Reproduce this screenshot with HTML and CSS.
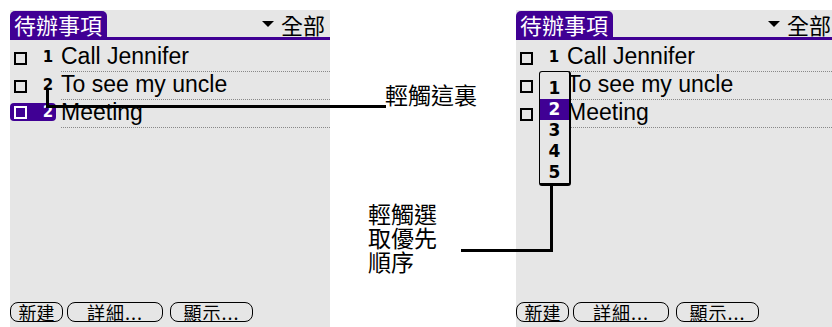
FILE: index.html
```html
<!DOCTYPE html>
<html lang="zh-Hant">
<head>
    <meta charset="UTF-8">
    <meta name="viewport" content="width=device-width, initial-scale=1.0">
    <title>待辦事項 優先順序</title>
    <link rel="stylesheet" href="styles.css">
</head>
<body>
    <main class="page">
        <section class="screen">
            <header class="titlebar">
                <span class="tab">待辦事項</span>
                <span class="category"><span class="arrow"></span>全部</span>
            </header>
            <ul class="todos">
                <li class="todo"><span class="check"></span><span class="prio">1</span><span class="desc">Call Jennifer</span></li>
                <li class="todo"><span class="check"></span><span class="prio">2</span><span class="desc">To see my uncle</span></li>
                <li class="todo selected"><span class="hit"><span class="check"></span><span class="prio">2</span></span><span class="desc">Meeting</span></li>
            </ul>
            <footer class="buttons">
                <button class="new">新建</button>
                <button class="details">詳細...</button>
                <button class="show">顯示...</button>
            </footer>
        </section>

        <div class="notes">
            <p class="note note-tap">輕觸這裏</p>
            <p class="note note-pick">輕觸選<br>取優先<br>順序</p>
        </div>

        <section class="screen">
            <header class="titlebar">
                <span class="tab">待辦事項</span>
                <span class="category"><span class="arrow"></span>全部</span>
            </header>
            <ul class="todos">
                <li class="todo"><span class="check"></span><span class="prio">1</span><span class="desc">Call Jennifer</span></li>
                <li class="todo"><span class="check"></span><span class="prio">2</span><span class="desc">To see my uncle</span></li>
                <li class="todo"><span class="check"></span><span class="prio">2</span><span class="desc">Meeting</span></li>
            </ul>
            <footer class="buttons">
                <button class="new">新建</button>
                <button class="details">詳細...</button>
                <button class="show">顯示...</button>
            </footer>
        </section>

        <!-- overlays: callout lines and the priority popup -->
        <div class="callout callout-tap"></div>
        <div class="callout callout-pick"></div>
        <ol class="popup">
            <li>1</li>
            <li class="on">2</li>
            <li>3</li>
            <li>4</li>
            <li>5</li>
        </ol>
    </main>
</body>
</html>
```

FILE: styles.css
```css
html, body {
    margin: 0;
    background: #fff;
    overflow: hidden;
}
body {
    font: 23px / 1 "Liberation Sans", "Noto Sans CJK TC", sans-serif;
    color: #000;
}
.page {
    position: relative;
    display: flex;
    align-items: flex-start;
    width: 832px;
    height: 327px;
    padding: 10px 0 0 10px;
    box-sizing: border-box;
}
.screen {
    flex: none;
    width: 320px;
    height: 317px;
    background: #e6e6e6;
    padding-top: 1px;
    box-sizing: border-box;
    display: flex;
    flex-direction: column;
}
.titlebar {
    display: flex;
    justify-content: space-between;
    align-items: flex-end;
    height: 26px;
    border-bottom: 3px solid #400094;
}
.tab {
    background: #400094;
    color: #fff;
    font-family: "Noto Sans CJK TC", sans-serif;
    font-size: 22px;
    line-height: 26px;
    padding: 0 5px 0 4px;
    border-radius: 5px 5px 0 0;
}
.category {
    display: flex;
    align-items: center;
    font-family: "Noto Sans CJK TC", sans-serif;
    font-size: 22px;
    line-height: 26px;
    padding-right: 5px;
}
.arrow {
    width: 0;
    height: 0;
    border-left: 6px solid transparent;
    border-right: 6px solid transparent;
    border-top: 6px solid #000;
    margin-right: 7px;
}
.todos {
    list-style: none;
    margin: 4px 0 0;
    padding: 0;
}
.todo {
    display: flex;
    align-items: flex-end;
    height: 28px;
}
.hit {
    display: flex;
    align-items: center;
    height: 18px;
    margin-bottom: 7px;
    background: #400094;
    border-radius: 4px;
    color: #fff;
    padding-right: 1px;
}
.check {
    width: 9px;
    height: 9px;
    border: 2px solid #000;
    margin: 0 0 7px 4px;
    flex: none;
}
.hit .check {
    border-color: #fff;
    margin-bottom: 0;
}
.prio {
    width: 14px;
    margin: 0 0 7px 14px;
    font: bold 15px / 1 "DejaVu Sans", sans-serif;
    text-align: center;
}
.hit .prio {
    margin-bottom: 0;
}
.desc {
    flex: 1;
    margin-left: 6px;
    padding-bottom: 3px;
    border-bottom: 1px dotted #888;
    white-space: nowrap;
}
.selected .desc {
    margin-left: 5px;
}
.buttons {
    display: flex;
    margin-top: auto;
    margin-bottom: 5px;
}
.buttons button {
    display: flex;
    justify-content: center;
    align-items: center;
    height: 20px;
    padding: 0;
    border: 1.5px solid #000;
    border-radius: 8px;
    background: none;
    font: 18px / 1 "Noto Sans CJK TC", sans-serif;
    color: #000;
    white-space: nowrap;
}
.buttons .new {
    width: 53px;
}
.buttons .details {
    width: 96px;
    margin-left: 4px;
    letter-spacing: 1px;
}
.buttons .show {
    width: 83px;
    margin-left: 7px;
    letter-spacing: 1px;
}
.notes {
    flex: none;
    width: 186px;
    height: 300px;
}
.note {
    margin: 0;
    font-family: "Noto Sans CJK TC", sans-serif;
    font-size: 23px;
    line-height: 24px;
}
.note-tap {
    margin: 72px 0 0 55px;
}
.note-pick {
    margin: 95px 0 0 38px;
}
.callout {
    position: absolute;
    border: 0 solid #000;
}
.callout-tap {
    left: 46px;
    top: 88px;
    width: 337px;
    height: 17px;
    border-width: 0 0 3px 3px;
}
.callout-pick {
    left: 461px;
    top: 177px;
    width: 89px;
    height: 72px;
    border-width: 0 3px 3px 0;
}
.popup {
    position: absolute;
    left: 539px;
    top: 71px;
    width: 29px;
    margin: 0;
    padding: 6px 0 0;
    list-style: none;
    background: #e6e6e6;
    border: 1px solid #000;
    border-width: 1px 2px 3px 1px;
    border-radius: 3px;
}
.popup li {
    height: 21px;
    font: bold 17px / 21px "DejaVu Sans", sans-serif;
    text-align: center;
}
.popup .on {
    background: #400094;
    color: #fff;
}
```
